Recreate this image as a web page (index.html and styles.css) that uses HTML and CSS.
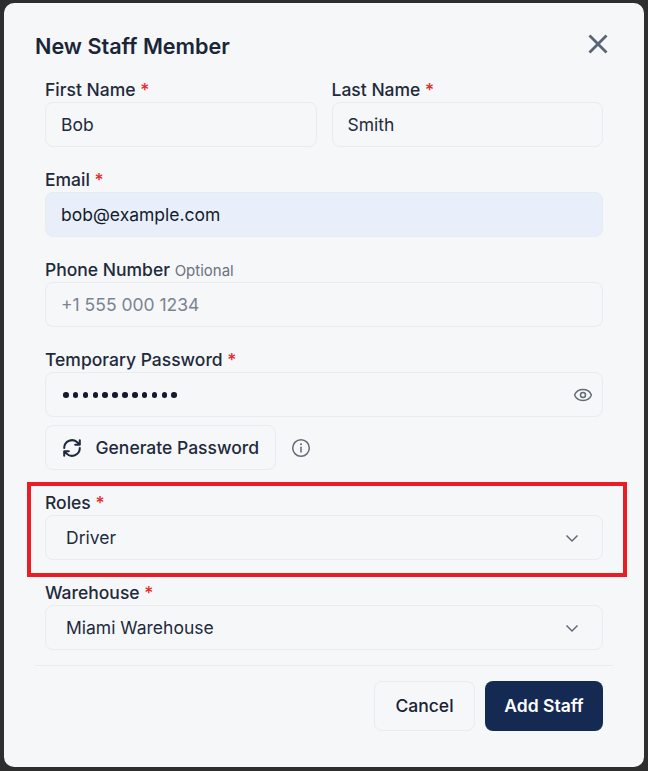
FILE: index.html
```html
<!DOCTYPE html>
<html lang="en">
<head>
<meta charset="utf-8">
<title>New Staff Member</title>
<link rel="stylesheet" href="styles.css">
</head>
<body>
<div class="modal">
  <header class="modal-head">
    <h2 class="modal-title">New Staff Member</h2>
    <button class="close" type="button" aria-label="Close">
      <svg viewBox="0 0 24 24" width="24" height="24" class="close-icon"><path d="M3.500 3.500 20.500 20.500M20.500 3.500 3.500 20.500"/></svg>
    </button>
  </header>
  <form class="form">
    <div class="row">
      <div class="field">
        <label class="label">First Name <span class="req">*</span></label>
        <div class="input">Bob</div>
      </div>
      <div class="field">
        <label class="label">Last Name <span class="req">*</span></label>
        <div class="input">Smith</div>
      </div>
    </div>
    <div class="field">
      <label class="label">Email <span class="req">*</span></label>
      <div class="input input-autofill">bob@example.com</div>
    </div>
    <div class="field">
      <label class="label">Phone Number <span class="optional">Optional</span></label>
      <div class="input input-placeholder">+1 555 000 1234</div>
    </div>
    <div class="field">
      <label class="label">Temporary Password <span class="req">*</span></label>
      <div class="input input-password">
        <span class="dots"><i></i><i></i><i></i><i></i><i></i><i></i><i></i><i></i><i></i><i></i><i></i><i></i></span>
        <svg class="eye" viewBox="0 0 20 20" width="20" height="20"><path d="M1.700 10.300a.9.9 0 0 1 0-.6C2.900 6.700 6.200 4.500 10 4.500s7.100 2.200 8.300 5.200a.9.9 0 0 1 0 .6c-1.200 3-4.500 5.200-8.300 5.200s-7.100-2.200-8.300-5.200Z"/><circle cx="10" cy="10" r="2.500"/></svg>
      </div>
      <div class="gen-row">
        <button class="gen-btn" type="button">
          <svg class="refresh" viewBox="0 0 24 24" width="22" height="22"><path d="M3.500 12a8.500 8.500 0 0 1 14.700-5.800L20.500 8.500M20.500 3.500v5h-5M20.500 12a8.500 8.500 0 0 1-14.700 5.800L3.500 15.500M3.500 20.500v-5h5"/></svg>
          <span>Generate Password</span>
        </button>
        <svg class="info" viewBox="0 0 20 20" width="20" height="20"><circle cx="10" cy="10" r="8.300"/><path d="M10 9.300v4.700"/><circle class="info-dot" cx="10" cy="6.300" r="1"/></svg>
      </div>
    </div>
    <div class="field">
      <label class="label">Roles <span class="req">*</span></label>
      <div class="input input-select">
        <span>Driver</span>
        <svg class="chev" viewBox="0 0 14 14" width="14" height="14"><path d="M1.500 4.500 7 10l5.500-5.500"/></svg>
      </div>
    </div>
    <div class="field">
      <label class="label">Warehouse <span class="req">*</span></label>
      <div class="input input-select">
        <span>Miami Warehouse</span>
        <svg class="chev" viewBox="0 0 14 14" width="14" height="14"><path d="M1.500 4.500 7 10l5.500-5.500"/></svg>
      </div>
    </div>
  </form>
  <footer class="modal-foot">
    <button class="btn btn-cancel" type="button">Cancel</button>
    <button class="btn btn-primary" type="button">Add Staff</button>
  </footer>
</div>
<div class="highlight"></div>
</body>
</html>
```
FILE: styles.css
```css
* { box-sizing: border-box; }
html, body { height: 100%; }
body {
  margin: 0;
  background: #2e2e2e;
  font-family: Inter, "Liberation Sans", sans-serif;
  color: #1a2233;
  padding: 3px 4px 4px;
  overflow: hidden;
}
.modal {
  position: relative;
  width: 640px;
  height: 764px;
  background: #f5f7f9;
  border-radius: 10px;
  padding: 0 31px;
}
.modal-head {
  display: flex;
  align-items: center;
  justify-content: space-between;
  height: 78px;
  padding-top: 7px;
}
.modal-title {
  margin: 0;
  font-size: 21.600px;
  line-height: 30px;
  font-weight: 600;
  color: #1a2638;
}
.close {
  display: flex;
  border: 0;
  background: none;
  padding: 0;
  margin: 0 3px 3px 0;
}
.close-icon path { fill: none; stroke: #5a6472; stroke-width: 2.800; }
.form {
  padding: 0 10px;
  display: flex;
  flex-direction: column;
  gap: 24px;
}
.row { display: flex; gap: 15px; }
.row .field { flex: 1; }
.field { display: flex; flex-direction: column; }
.label {
  font-size: 17.500px;
  line-height: 18px;
  font-weight: 500;
  color: #1f2a3c;
  height: 21px;
}
.req { color: #e5262b; }
.optional { font-size: 15px; font-weight: 400; color: #6b7280; }
.input {
  height: 45px;
  border: 1.500px solid #e9ebef;
  border-radius: 8px;
  padding: 0 15px;
  display: flex;
  align-items: center;
  font-size: 17.500px;
  color: #1f2a3c;
}
.input-autofill { background: #e8effb; color: #141c2b; }
.input-placeholder { color: #7b8491; }
.input-password { justify-content: space-between; padding-right: 9px; }
.dots { display: flex; gap: 4.370px; margin: 1px 0 0 2px; }
.dots i { width: 5.500px; height: 5.500px; border-radius: 50%; background: #141c2b; }
.eye { fill: none; stroke: #636b78; stroke-width: 1.500; }
.gen-row { display: flex; align-items: center; gap: 15px; margin-top: 8px; }
.gen-btn {
  display: flex;
  align-items: center;
  gap: 13px;
  height: 45px;
  width: 231px;
  padding: 0 14.500px;
  background: none;
  border: 1.500px solid #e9ebef;
  border-radius: 8px;
  font: 500 17.500px Inter, "Liberation Sans", sans-serif;
  color: #1f2a3c;
}
.refresh { fill: none; stroke: #1f2a3c; stroke-width: 2.200; stroke-linecap: round; stroke-linejoin: round; flex: none; }
.info { fill: none; stroke: #636b78; stroke-width: 1.500; stroke-linecap: round; }
.info-dot { fill: #636b78; stroke: none; }
.input-select { justify-content: space-between; padding: 0 23px 0 20px; }
.chev { fill: none; stroke: #636b78; stroke-width: 1.500; }
.modal-foot {
  margin-top: 15px;
  border-top: 1.500px solid #e9ebef;
  padding: 14.500px 10px 0;
  display: flex;
  justify-content: flex-end;
  gap: 10px;
}
.btn {
  height: 50px;
  border-radius: 8px;
  font: 500 17.500px Inter, "Liberation Sans", sans-serif;
}
.btn-cancel { width: 101px; background: none; border: 1.500px solid #e9ebef; color: #1a2233; }
.btn-primary { width: 118px; background: #152a52; border: 0; color: #fff; font-weight: 600; }
.highlight {
  position: absolute;
  left: 27px;
  top: 482px;
  width: 600px;
  height: 95px;
  border: 4px solid #ea1c24;
  pointer-events: none;
}
```
